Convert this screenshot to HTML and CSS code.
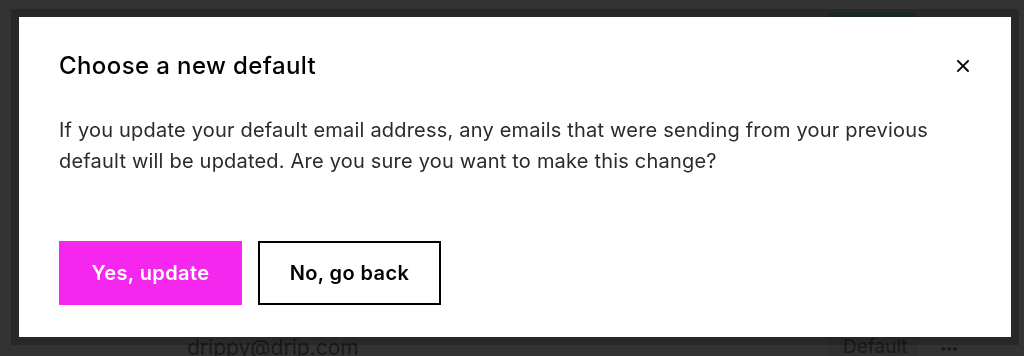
FILE: index.html
```html
<!DOCTYPE html>
<html lang="en">
<head>
    <meta charset="UTF-8">
    <meta name="viewport" content="width=device-width, initial-scale=1.0">
    <title>Email settings</title>
    <link rel="stylesheet" href="styles.css">
</head>
<body>
    <div class="page">
        <div class="topbar">
            <button class="add-btn"></button>
        </div>
        <div class="email-row">
            <span class="email">drippy@drip.com</span>
            <span class="badge">Default</span>
            <span class="dots">•••</span>
        </div>
    </div>

    <div class="overlay">
        <div class="modal">
            <div class="modal-header">
                <h2 class="modal-title">Choose a new default</h2>
                <button class="close-btn" aria-label="Close">
                    <svg width="14" height="14" viewBox="0 0 14 14">
                        <path d="M2 2 L12 12 M12 2 L2 12" stroke="#000" stroke-width="1.8" stroke-linecap="square" fill="none"/>
                    </svg>
                </button>
            </div>
            <p class="modal-text">If you update your default email address, any emails that were sending from your previous default will be updated. Are you sure you want to make this change?</p>
            <div class="modal-actions">
                <button class="btn btn-primary">Yes, update</button>
                <button class="btn btn-secondary">No, go back</button>
            </div>
        </div>
    </div>
</body>
</html>
```

FILE: styles.css
```css
body {
    margin: 0;
    font-family: Inter, "Noto Sans", sans-serif;
    background-color: #333333;
    overflow: hidden;
    height: 356px;
}

.page {
    height: 367px;
    display: flex;
    flex-direction: column;
    justify-content: space-between;
}

.topbar {
    display: flex;
    justify-content: flex-end;
    padding: 12px 107px 0 0;
}

.add-btn {
    width: 90px;
    height: 40px;
    border: none;
    border-radius: 8px;
    background-color: #23342a;
}

.email-row {
    display: flex;
    align-items: center;
    padding: 0 0 0 187px;
    height: 40px;
    color: #1a1a1a;
    font-size: 21px;
}

.email {
    flex: 1;
}

.badge {
    padding: 0 12px 0 16px;
    width: 63px;
    font-size: 19px;
    background-color: #303030;
    height: 40px;
    line-height: 40px;
}

.dots {
    width: 106px;
    padding-left: 22px;
    font-size: 12px;
    letter-spacing: -1px;
    box-sizing: border-box;
}

.overlay {
    position: fixed;
    top: 0;
    left: 0;
    right: 0;
    bottom: 0;
    padding: 17px 0 0 19px;
}

.modal {
    width: 992px;
    height: 320px;
    box-sizing: border-box;
    padding: 35px 40px 32px;
    background-color: white;
    box-shadow: 0 0 0 8px rgba(0, 0, 0, 0.2);
    display: flex;
    flex-direction: column;
}

.modal-header {
    display: flex;
    justify-content: space-between;
    align-items: center;
    height: 28px;
}

.modal-title {
    margin: 0;
    font-size: 24px;
    font-weight: 500;
    line-height: 28px;
    letter-spacing: 0.4px;
    color: #000;
}

.close-btn {
    border: none;
    background: none;
    padding: 0;
    margin-right: 1px;
    display: flex;
    cursor: pointer;
}

.modal-text {
    margin: 35px 0 0;
    font-size: 20px;
    line-height: 31px;
    letter-spacing: 0.2px;
    color: #2b2b2b;
    max-width: 900px;
}

.modal-actions {
    margin-top: auto;
    display: flex;
    gap: 16px;
}

.btn {
    width: 183px;
    height: 64px;
    font-family: Inter, "Noto Sans", sans-serif;
    font-size: 20px;
    font-weight: 600;
    letter-spacing: 0.4px;
    border: 2px solid transparent;
    cursor: pointer;
}

.btn-primary {
    background-color: #f527ef;
    color: white;
    border-color: #f527ef;
}

.btn-secondary {
    background-color: white;
    color: #000;
    border-color: #000;
}
```
